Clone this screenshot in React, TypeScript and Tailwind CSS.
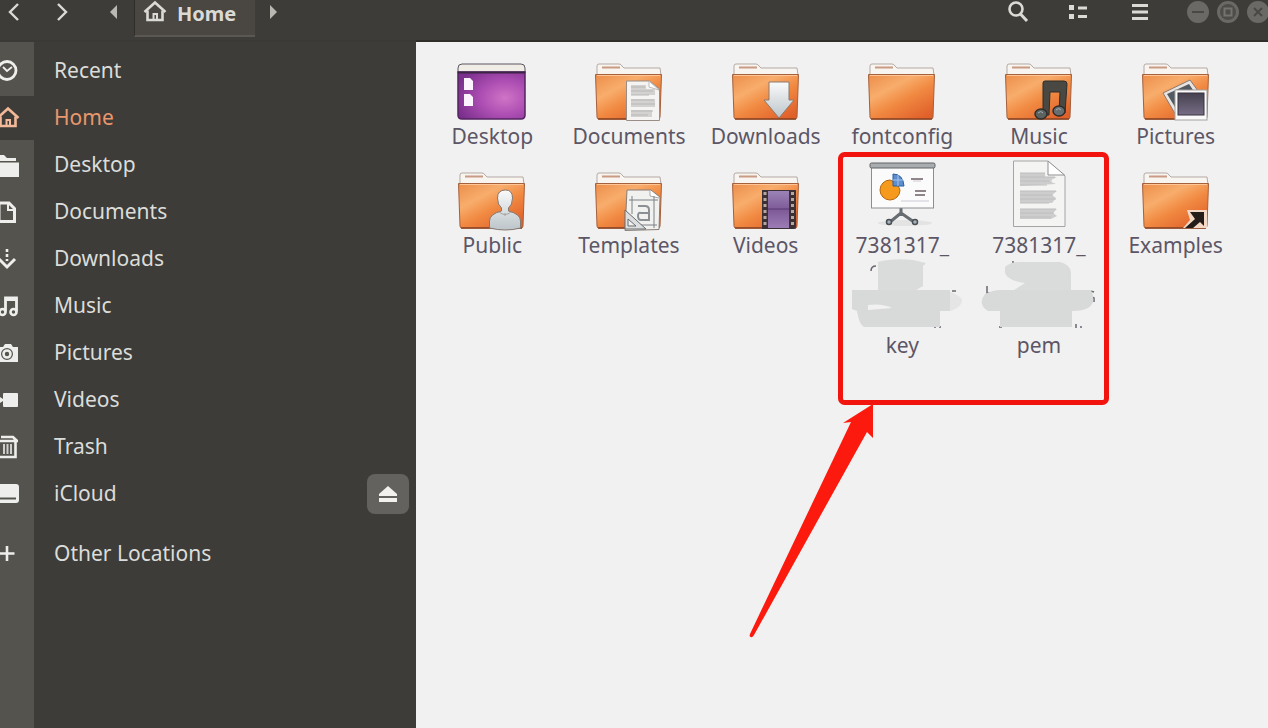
import type { ReactNode } from "react";

interface IChildren {
  children?: ReactNode;
}

interface IPlace {
  name: string;
  icon: ReactNode;
  active?: boolean;
  mounted?: boolean;
}

interface IEntry {
  name: string;
  icon: ReactNode;
  smudge?: ReactNode;
  ext?: string;
}

const Glyph = ({ children }: IChildren) => (
  <svg width="24" height="24" viewBox="0 0 24 24" fill="none" stroke="currentColor" strokeWidth="2.6" aria-hidden="true">
    {children}
  </svg>
);

const HouseGlyph = () => (
  <Glyph>
    <path d="M1.5 12 12 2.5 22.5 12" />
    <path d="M4.5 10.5v9.5h15v-9.500" />
    <path d="M10.5 20v-6h3.5v6" strokeWidth="2" />
  </Glyph>
);

const places: IPlace[] = [
  {
    name: "Recent",
    icon: (
      <Glyph>
        <circle cx="11" cy="11.5" r="9" strokeWidth="2.8" />
        <path d="m7 8 4 4 5-4" strokeWidth="1.8" />
      </Glyph>
    ),
  },
  { name: "Home", icon: <HouseGlyph />, active: true },
  {
    name: "Desktop",
    icon: (
      <Glyph>
        <path d="M2 2h6l3 3h9v3H2zM2 9.5h21V24H2z" fill="currentColor" stroke="none" />
      </Glyph>
    ),
  },
  {
    name: "Documents",
    icon: (
      <Glyph>
        <path d="M3 3h10l5.500 5.500V21.500H3z" strokeWidth="3" />
        <path d="M12 4v6h6" strokeWidth="2" />
      </Glyph>
    ),
  },
  {
    name: "Downloads",
    icon: (
      <Glyph>
        <path d="M11 2v12" strokeDasharray="3 2" />
        <path d="m3 12 8 8 8-8" strokeWidth="3" />
      </Glyph>
    ),
  },
  {
    name: "Music",
    icon: (
      <Glyph>
        <path d="M9.5 17.500V4h11v13.500M9.5 5.500h11" strokeWidth="2.8" />
        <circle cx="6.500" cy="18" r="3" />
        <circle cx="17.500" cy="18" r="3" />
      </Glyph>
    ),
  },
  {
    name: "Pictures",
    icon: (
      <Glyph>
        <path
          d="M2 6h5l2-3h6l2 3h5v15H2zM11 7a6 6 0 1 0 0 12 6 6 0 0 0 0-12z"
          fill="currentColor"
          fillRule="evenodd"
          stroke="none"
        />
        <circle cx="11" cy="13" r="3.5" />
      </Glyph>
    ),
  },
  {
    name: "Videos",
    icon: (
      <Glyph>
        <rect x="7" y="5" width="15" height="14" rx="1" fill="currentColor" stroke="none" />
        <path d="M1 7l6 4v2l-6 4z" fill="currentColor" stroke="none" />
      </Glyph>
    ),
  },
  {
    name: "Trash",
    icon: (
      <Glyph>
        <path d="M2 7v15h17.500V7M1 6h21M5 2h12l4 4" />
        <path d="M8 9v10M11.500 9v10M15 9v10" strokeWidth="2" opacity="0.8" />
      </Glyph>
    ),
  },
  {
    name: "iCloud",
    mounted: true,
    icon: (
      <Glyph>
        <path d="M2 2h18a3 3 0 0 1 3 3v13a3 3 0 0 1-3 3H2zM2 15.500v2h18v-2z" fill="currentColor" fillRule="evenodd" stroke="none" />
      </Glyph>
    ),
  },
];

const otherLocations: IPlace = {
  name: "Other Locations",
  icon: (
    <Glyph>
      <path d="M11 4v15M3 11.500h15.500" />
    </Glyph>
  ),
};

const Folder = ({ children }: IChildren) => (
  <svg width="70" height="60" viewBox="0 0 70 60" aria-hidden="true">
    <path d="M3 12V3q0-2 2-2h20q2 0 3 2l2 2h36l1 7z" fill="#f8f4f0" stroke="#b3a9a4" />
    <path d="M8 4.5h18" stroke="#c99b85" strokeWidth="2" />
    <path d="M1.5 11.5h66L66 54q0 2-2 2H5q-2 0-2-2z" fill="url(#folderFront)" stroke="#a5603c" />
    <path d="M3 12.500h63" stroke="#ffc596" />
    <path d="M4 56h61" stroke="#8b4320" strokeWidth="1.500" />
    {children}
  </svg>
);

const DesktopIcon = () => (
  <svg width="70" height="60" viewBox="0 0 70 60" aria-hidden="true">
    <path d="M1 5q0-4 4-4h59q4 0 4 4v5H1z" fill="#f0ede6" stroke="#5b5560" />
    <path d="M1 9h67v43q0 4-4 4H5q-4 0-4-4z" fill="url(#desktopFill)" stroke="#54245f" strokeWidth="1.500" />
    <path d="M1 9.500h67" stroke="#3c2347" strokeWidth="2" />
    <path d="M7 15h6l3 3v9H7zM7 31h6l3 3v9H7z" fill="#fdf3ff" />
  </svg>
);

const SlidesIcon = () => (
  <svg width="70" height="72" viewBox="0 0 70 72" aria-hidden="true">
    <ellipse cx="38" cy="63" rx="27" ry="3" fill="#e3e3e3" />
    <path d="M34 48v8M34 53 23 62M34 53l13 9" stroke="#666c70" strokeWidth="3" fill="none" />
    <circle cx="22" cy="62" r="2.500" fill="#a5b2bc" stroke="#4a4f54" strokeWidth="1.500" />
    <circle cx="48" cy="62" r="2.500" fill="#a5b2bc" stroke="#4a4f54" strokeWidth="1.500" />
    <rect x="4.500" y="6" width="62" height="42" fill="#fbfbfb" stroke="#8b8e91" />
    <rect x="3" y="3" width="65" height="5" rx="1.500" fill="#a9adb0" stroke="#5e6265" />
    <path d="M23 20a10 10 0 1 0 10 10l-3-7z" fill="#f59a1c" stroke="#b5660b" />
    <path d="M26 14q10 0 11 12H26z" fill="#5d8fd0" stroke="#2f5c9e" />
    <path d="M31 15v11M26 20h10" stroke="#a4c4ea" />
    <path d="M44 19h12M48 31h11M48 35h10" stroke="#6e5f64" strokeWidth="1.500" />
    <path d="M46 21h8M34 41h28" stroke="#c9c9d4" />
  </svg>
);

const TextIcon = () => (
  <svg width="70" height="72" viewBox="0 0 70 72" aria-hidden="true">
    <path d="M9.500 1h34L61 16v50.500H9.500z" fill="#f4f4f3" stroke="#a3a4a4" />
    <path d="M44 1v14h16.500z" fill="#fff" stroke="#8d8f8f" />
    <path d="M16 13h25v4h12l-8 4 7 3-36 2zM16 31h37l-5 4 4 3-4 5H16zM16 49h37l-4 4 4 3-6 3H16z" fill="#cdcdcd" />
    <path
      d="M16 13h25M16 17h35M16 21h32M16 25h27M16 31h36M16 35h33M16 39h36M16 43h29M16 49h36M16 53h34M16 57h31"
      stroke="#bdbebe"
    />
  </svg>
);

const KeySmudge = () => (
  <svg width="120" height="75" viewBox="0 0 120 75" className="overflow-visible" aria-hidden="true">
    <path d="M29 13q0-5 5-5M110 33h4M92 69h2M97 69h2" stroke="#6b6673" strokeWidth="1.5" fill="none" />
    <path d="M36 4q14-4 35-2l13 3-3 3v20l-12 7H36z" fill="#dadbdb" />
    <path d="M10 32h98v21H98v16H22q-5-3-7-16l-5-2z" fill="#d8d9d9" />
    <path d="M108 34q12 4 12 9-1 7-12 10z" fill="#e5e5e5" />
    <path d="M26 47q14-2 24 3l-24 2z" fill="#f1f1f1" />
  </svg>
);

const PemSmudge = () => (
  <svg width="120" height="75" viewBox="0 0 120 75" className="overflow-visible" aria-hidden="true">
    <path
      d="M34 3v3M67 8q3-4 6 0M79 8q3-4 6 0M8 28v7h6M79 35h5M89 35h5M98 35h5M115 34q-5-2-5 1t5 5v4M91 69v-2M97 66v4M101 69h2M20 69h3"
      stroke="#6b6673"
      strokeWidth="1.5"
      fill="none"
    />
    <path d="M26 9q5-5 15-5h40q11 3 11 11v19H32l14-9q-17-2-20-10z" fill="#dadbdb" />
    <path d="M6 36q8-4 16-4h90q3 6 2 12-3 9-21 9v16H21V53H9q-11-7-3-17z" fill="#d8d9d9" />
  </svg>
);

const entries: IEntry[] = [
  { name: "Desktop", icon: <DesktopIcon /> },
  {
    name: "Documents",
    icon: (
      <Folder>
        <path d="M32.500 18h23l10 8v31.500h-33z" fill="#f5f4f2" stroke="#9a8d85" />
        <path d="M55 18v6l10 3z" fill="#fff" stroke="#bbb" />
        <path d="M37 22h15v4h9v6H37zM37 36h24v8H37zM37 47h21v7H37z" fill="#d3d2d1" />
        <path d="M37 24h14M37 28h22M37 32h18M37 37h23M37 41h24M37 48h22M37 52h17" stroke="#b8b8b7" />
      </Folder>
    ),
  },
  {
    name: "Downloads",
    icon: (
      <Folder>
        <path d="M38 19h20v18h5L48 55 33 37h5z" fill="url(#silver)" stroke="#8b7b72" />
      </Folder>
    ),
  },
  { name: "fontconfig", icon: <Folder /> },
  {
    name: "Music",
    icon: (
      <Folder>
        <path d="M39 20q0-2 2-2h19q3 0 3 3l-2 29h-6l1-21H46l-1 23h-6z" fill="#4a4843" stroke="#302d29" />
        <ellipse cx="37" cy="51" rx="6" ry="5" fill="#5c625f" stroke="#302d29" strokeWidth="1.500" />
        <ellipse cx="55" cy="48" rx="6" ry="5" fill="#686e70" stroke="#302d29" strokeWidth="1.500" />
        <path d="M34 50q3-3 5 0M52 47q3-3 5 0" stroke="#9fb0b8" fill="none" />
      </Folder>
    ),
  },
  {
    name: "Pictures",
    icon: (
      <Folder>
        <path d="m22 30 27-13 11 15-24 22z" fill="#e9e4e0" stroke="#897a72" />
        <path d="m26 31 22-10 8 12-19 16z" fill="#535b62" />
        <rect x="34" y="27" width="32" height="30" fill="#fbfafa" stroke="#a5a1a0" />
        <rect x="37" y="30" width="26" height="22" fill="url(#photo)" stroke="#37303f" />
      </Folder>
    ),
  },
  {
    name: "Public",
    icon: (
      <Folder>
        <path
          d="M48.500 18q7 0 7 8 0 7-4 10v3q12 3 12 10v7q-15 4-31 0v-7q0-7 12-10v-3q-4-3-4-10 0-8 8-8z"
          fill="url(#silver)"
          stroke="#85786f"
        />
        <path d="M42 40q6 5 12 0M48 41v3" stroke="#a9a5a2" fill="none" />
      </Folder>
    ),
  },
  {
    name: "Templates",
    icon: (
      <Folder>
        <path d="M33 18h24l9 7-1 32.500-34 1z" fill="#f1f1f0" stroke="#897d75" />
        <path d="M56 18v6l9 2" fill="#fff" stroke="#a9a9a9" />
        <path d="M35 28h29M38 24v18M60 24v32M45 53h18" stroke="#7d8184" />
        <path d="M44 34h7q4 0 4 4v10H47q-3 0-3-4t3-3h8" fill="none" stroke="#8b9094" strokeWidth="2" />
        <path d="m31 38 21 19H31zM34 47v7h8z" fill="#dcdedf" fillRule="evenodd" stroke="#676c70" />
      </Folder>
    ),
  },
  {
    name: "Videos",
    icon: (
      <Folder>
        <path d="M31 18h34v36q0 3-3 3H31z" fill="#3a3036" />
        <path d="M37 19h21v37H37z" fill="url(#film)" />
        <path d="M34 20v36M61.500 20v36" stroke="#b8a79f" strokeWidth="3" strokeDasharray="3 3" />
        <path d="M37 37h21" stroke="#5b3973" />
      </Folder>
    ),
  },
  { name: "7381317_", icon: <SlidesIcon />, smudge: <KeySmudge />, ext: "key" },
  { name: "7381317_", icon: <TextIcon />, smudge: <PemSmudge />, ext: "pem" },
  {
    name: "Examples",
    icon: (
      <Folder>
        <path d="M46 38h20v18H42l7-8z" fill="#f3d8c5" />
        <path d="M49 40h14v14l-4-4-7 6h-8l10-9z" fill="#241d19" />
      </Folder>
    ),
  },
];

// Gradients shared by the folder drawings
const Gradients = () => (
  <svg width="0" height="0" className="absolute" aria-hidden="true">
    <defs>
      <linearGradient id="folderFront" x1="0" y1="0" x2="0.8" y2="1">
        <stop offset="0" stopColor="#ec8d4a" />
        <stop offset="0.35" stopColor="#f8ad6c" />
        <stop offset="0.6" stopColor="#f18a42" />
        <stop offset="1" stopColor="#e0602a" />
      </linearGradient>
      <radialGradient id="desktopFill" cx="0.7" cy="0.55" r="0.75">
        <stop offset="0" stopColor="#cf74c6" />
        <stop offset="0.5" stopColor="#ab4db2" />
        <stop offset="1" stopColor="#7b2f8c" />
      </radialGradient>
      <linearGradient id="silver" x1="0" y1="0" x2="0" y2="1">
        <stop offset="0" stopColor="#fafafa" />
        <stop offset="1" stopColor="#bcc5ca" />
      </linearGradient>
      <linearGradient id="photo" x1="0" y1="0" x2="0" y2="1">
        <stop offset="0" stopColor="#45414f" />
        <stop offset="1" stopColor="#776d86" />
      </linearGradient>
      <linearGradient id="film" x1="0" y1="0" x2="0" y2="1">
        <stop offset="0" stopColor="#9b83b5" />
        <stop offset="0.5" stopColor="#7d5a97" />
        <stop offset="1" stopColor="#9c7cb4" />
      </linearGradient>
    </defs>
  </svg>
);

const HeaderButton = ({ label, className, children }: IChildren & { label: string; className: string }) => (
  <button type="button" aria-label={label} className={`flex h-6 shrink-0 items-center justify-center ${className}`}>
    {children}
  </button>
);

const Header = () => {
  return (
    <header className="flex h-10 items-start justify-between overflow-hidden bg-[#3d3c38] text-[#dcdad5]">
      <div className="flex items-start">
        <HeaderButton label="Back" className="w-7">
          <svg width="12" height="18" viewBox="0 0 12 18" fill="none" stroke="currentColor" strokeWidth="2.4">
            <path d="M10 1 2 9l8 8" />
          </svg>
        </HeaderButton>
        <HeaderButton label="Forward" className="ml-5 w-7">
          <svg width="12" height="18" viewBox="0 0 12 18" fill="none" stroke="currentColor" strokeWidth="2.4">
            <path d="m2 1 8 8-8 8" />
          </svg>
        </HeaderButton>
        <HeaderButton label="Parent folders" className="ml-6 w-7">
          <svg width="8" height="14" viewBox="0 0 8 14" fill="#b9b8b3">
            <path d="M7 0v14L0 7z" />
          </svg>
        </HeaderButton>
        <button
          type="button"
          className="ml-1.5 flex h-[37px] w-[121px] items-start gap-2.5 border-b-2 border-l border-b-[#5b5853] border-l-[#2f2e2b] bg-[#4a4742] pl-2 text-xl leading-[27px] font-bold"
        >
          <HouseGlyph />
          Home
        </button>
        <HeaderButton label="Child folders" className="ml-1 w-7">
          <svg width="8" height="14" viewBox="0 0 8 14" fill="#b9b8b3">
            <path d="M1 0v14l7-7z" />
          </svg>
        </HeaderButton>
      </div>
      <div className="flex items-start">
        <HeaderButton label="Search" className="w-7">
          <svg width="22" height="22" viewBox="0 0 22 22" fill="none" stroke="currentColor" strokeWidth="2.6">
            <circle cx="9" cy="8" r="6.500" />
            <path d="m13.500 13 6.500 7" strokeWidth="3" />
          </svg>
        </HeaderButton>
        <HeaderButton label="List view" className="ml-8 w-7">
          <svg width="18" height="16" viewBox="0 0 18 16" fill="currentColor">
            <path d="M0 1h5v5H0zM0 10h5v5H0zM9 2.500h9v3H9zM9 11h9v3H9z" />
          </svg>
        </HeaderButton>
        <HeaderButton label="Menu" className="ml-8 w-8">
          <svg width="16" height="16" viewBox="0 0 16 16" fill="currentColor">
            <path d="M0 0h16v3H0zM0 6.500h16v3H0zM0 13h16v3H0z" />
          </svg>
        </HeaderButton>
        <HeaderButton label="Minimize" className="ml-[30px] w-6">
          <svg width="22" height="22" viewBox="0 0 22 22">
            <circle cx="11" cy="11" r="11" fill="#6b6965" />
            <path d="M5 11h12" stroke="#4a4844" strokeWidth="2" />
          </svg>
        </HeaderButton>
        <HeaderButton label="Maximize" className="ml-1.5 w-6">
          <svg width="22" height="22" viewBox="0 0 22 22" fill="none">
            <circle cx="11" cy="11" r="9.500" fill="#4f4d49" stroke="#6b6965" strokeWidth="3" />
            <path d="M7.500 7.500h7v7h-7z" stroke="#75736e" strokeWidth="2" />
          </svg>
        </HeaderButton>
        <HeaderButton label="Close" className="-mr-0.5 ml-1.5 w-6">
          <svg width="22" height="22" viewBox="0 0 22 22">
            <circle cx="11" cy="11" r="11" fill="#6b6965" />
            <path d="m7 7 8 8M15 7l-8 8" stroke="#4a4844" strokeWidth="2" />
          </svg>
        </HeaderButton>
      </div>
    </header>
  );
};

const Place = ({ place }: { place: IPlace }) => (
  <li className="flex h-[47px] items-center">
    <a
      href={`#${place.name}`}
      className={`flex flex-1 items-center ${place.active ? "text-[#e9976c]" : "text-[#dcdcda]"}`}
    >
      <span className={`flex h-11 w-[34px] items-center ${place.active ? "bg-[#3d3c38] text-[#f3b999]" : "text-[#eeeeec]"}`}>
        <span className="-ml-1">{place.icon}</span>
      </span>
      <span className="ml-5">{place.name}</span>
    </a>
    {place.mounted && (
      <button
        type="button"
        aria-label={`Eject ${place.name}`}
        className="mr-[7px] flex h-10 w-[42px] items-center justify-center rounded-lg bg-[#63625f] text-[#f2f1ee]"
      >
        <svg width="18" height="18" viewBox="0 0 18 18" fill="currentColor" aria-hidden="true">
          <path d="m9 1 9 8v2H0V9zM0 13h18v4H0z" />
        </svg>
      </button>
    )}
  </li>
);

const Sidebar = () => {
  return (
    <nav
      aria-label="Places"
      className="w-[416px] shrink-0 overflow-hidden border-t-2 border-[#3a3935] bg-[linear-gradient(to_right,#54534e_34px,#3d3c38_34px)] pt-[5px] text-[21px] leading-[25px]"
    >
      <ul>
        {places.map((el) => (
          <Place key={el.name} place={el} />
        ))}
      </ul>
      <ul className="mt-[13px]">
        <Place place={otherLocations} />
      </ul>
    </nav>
  );
};

const Entry = ({ entry }: { entry: IEntry }) => (
  <li>
    <button type="button" className="flex w-full flex-col items-center">
      <span className="flex h-[72px] items-end">{entry.icon}</span>
      <span className="mt-px">{entry.name}</span>
      {entry.smudge}
      {entry.ext && <span>{entry.ext}</span>}
    </button>
  </li>
);

// Red frame and arrow that lie over the two certificate files
const Highlight = () => (
  <svg
    width="370"
    height="490"
    viewBox="0 0 370 490"
    className="pointer-events-none absolute top-[108px] left-[328px]"
    aria-hidden="true"
  >
    <rect x="96.500" y="4.500" width="266" height="248" rx="4" fill="none" stroke="#f2150f" strokeWidth="5" />
    <path d="M129 254 99 273l8-1L6 484q-1 3 1 3 1 1 3-2L123 282l6 6z" fill="#fb1a0d" />
  </svg>
);

const App = () => {
  return (
    <div className="flex min-h-screen flex-col bg-[#f1f1f1] font-['Noto_Sans','Open_Sans',sans-serif]">
      <Gradients />
      <Header />
      <div className="flex flex-1">
        <Sidebar />
        <main className="relative flex-1 border-t-2 border-[#2f2e2b] pt-[9px] pr-6 pl-2">
          <ul className="grid grid-cols-6 gap-y-[11px] text-[21px] leading-[25px] text-[#5c5666]">
            {entries.map((el, i) => (
              <Entry key={i} entry={el} />
            ))}
          </ul>
          <Highlight />
        </main>
      </div>
    </div>
  );
};

export default App;
